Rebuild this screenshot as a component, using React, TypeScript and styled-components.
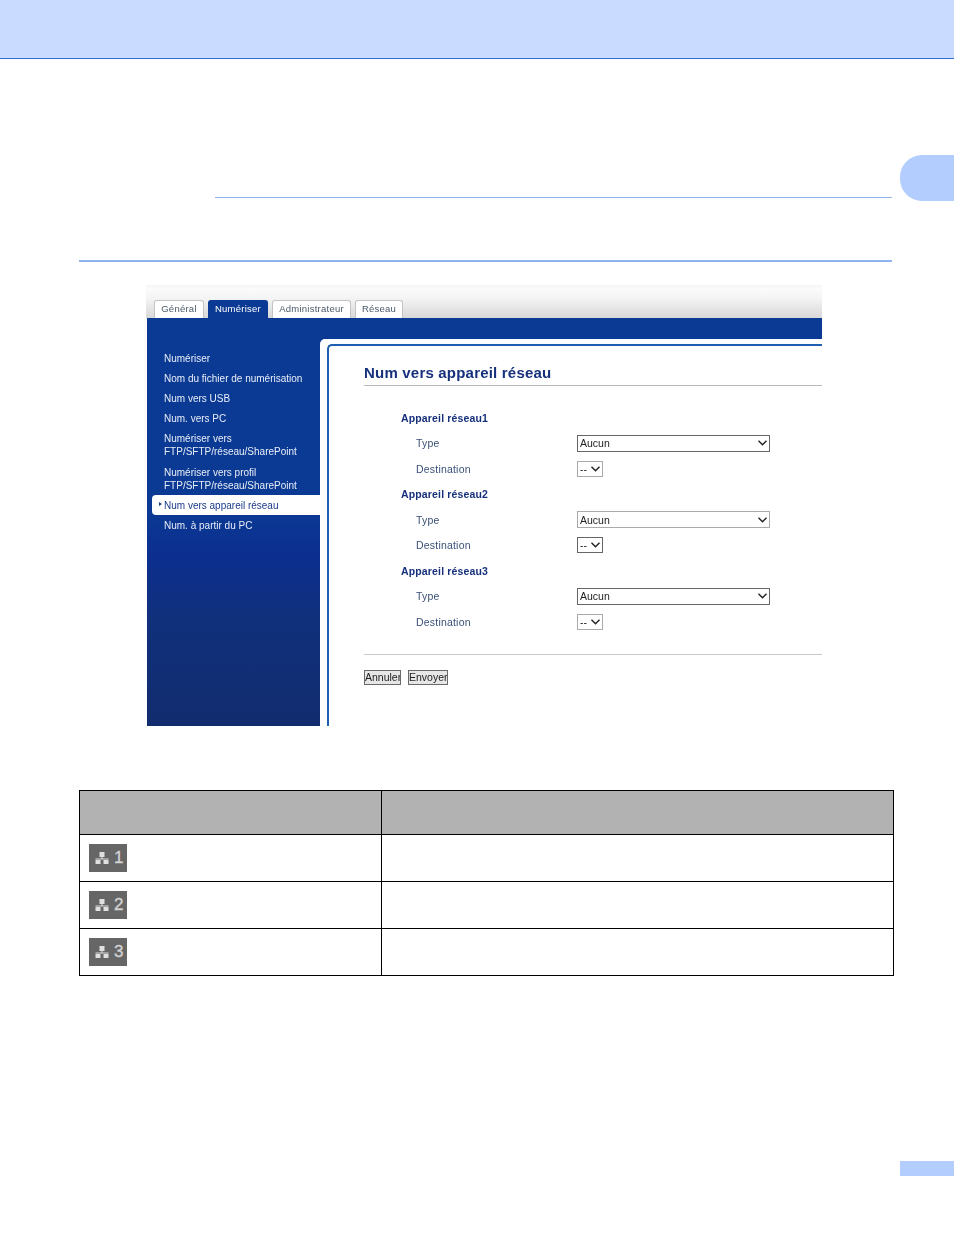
import React from "react";
import styled, { createGlobalStyle } from "styled-components";

const Global = createGlobalStyle`
  html, body { margin: 0; padding: 0; background: #fff; }
  body { font-family: "Liberation Sans", Arial, sans-serif; }
`;

const Page = styled.div`
  position: relative;
  width: 954px;
  height: 1235px;
  overflow: hidden;
  display: flex;
  flex-direction: column;
`;
const Header = styled.header`
  height: 58px;
  background: #c9dbff;
  border-bottom: 1px solid #2f6fe0;
  flex: none;
`;
const ChapterTab = styled.div`
  position: absolute;
  top: 155px;
  right: 0;
  width: 54px;
  height: 46px;
  background: #b3cdff;
  border-radius: 22px 0 0 22px;
`;
const Rule = styled.div<{ $left: number; $top: number; $h: number; $color: string }>`
  flex: none;
  margin: ${(p) => p.$top}px 62px 0 ${(p) => p.$left}px;
  height: ${(p) => p.$h}px;
  background: ${(p) => p.$color};
`;
const Shot = styled.div`
  flex: none;
  width: 676px;
  height: 441px;
  margin: 23px 0 0 146px;
  display: flex;
  flex-direction: column;
  overflow: hidden;
  filter: blur(0.25px);
`;
const TabBar = styled.div`
  flex: none;
  height: 33px;
  box-sizing: border-box;
  padding: 15px 0 0 8px;
  display: flex;
  gap: 4px;
  align-items: flex-end;
  background: linear-gradient(#f4f4f4 0, #fbfbfb 4px, #f3f3f3 14px, #d8d8d8 33px);
`;
const Tab = styled.div<{ $active?: boolean; $w: number }>`
  width: ${(p) => p.$w}px;
  height: 18px;
  box-sizing: border-box;
  border: 1px solid ${(p) => (p.$active ? "#0b3a94" : "#c4c4c4")};
  border-bottom: none;
  border-radius: 3px 3px 0 0;
  background: ${(p) => (p.$active ? "#0b3a94" : "#fff")};
  color: ${(p) => (p.$active ? "#fff" : "#4a5a6a")};
  font-size: 9.5px;
  line-height: 16px;
  text-align: center;
  letter-spacing: 0.25px;
`;
const Body = styled.div`
  flex: 1;
  display: flex;
  min-height: 0;
  padding: 0 0 0 1px;
  background: #fff;
`;
const Sidebar = styled.nav`
  flex: none;
  width: 173px;
  box-sizing: border-box;
  padding-top: 30px;
  padding-left: 5px;
  background: linear-gradient(#0b3a94 0, #0b3a94 190px, #0c2f90 235px, #10307c 300px, #122c6e 408px);
  display: flex;
  flex-direction: column;
`;
const MenuItem = styled.div<{ $active?: boolean }>`
  position: relative;
  padding: 3.6px 0 3.6px 12px;
  font-size: 10px;
  line-height: 13px;
  color: ${(p) => (p.$active ? "#1a3a8a" : "#e8edf6")};
  background: ${(p) => (p.$active ? "#fff" : "transparent")};
  border-radius: ${(p) => (p.$active ? "4px 0 0 4px" : "0")};
`;
const Arrow = styled.span`
  position: absolute;
  left: 7px;
  top: 7px;
  width: 0;
  height: 0;
  border-left: 3px solid #1a3a8a;
  border-top: 2.5px solid transparent;
  border-bottom: 2.5px solid transparent;
`;
const MainBand = styled.div`
  flex: 1;
  min-width: 0;
  padding-top: 21px;
  background: #0b3a94;
  display: flex;
`;
const Panel = styled.div`
  flex: 1;
  background: #fff;
  border-radius: 5px 0 0 0;
  padding: 5px 0 0 7px;
  display: flex;
`;
const Inner = styled.main`
  flex: 1;
  box-sizing: border-box;
  border-top: 2px solid #1f5fb0;
  border-left: 2px solid #1f5fb0;
  border-radius: 5px 0 0 0;
  padding: 18px 0 0 35px;
`;
const Title = styled.h1`
  margin: 0;
  box-sizing: border-box;
  border-bottom: 1px solid #b9b9b9;
  font-size: 15px;
  line-height: 17px;
  font-weight: 700;
  color: #17307c;
  height: 22px;
  letter-spacing: 0.2px;
`;
const Form = styled.div`
  margin-top: 19px;
  padding-left: 37px;
`;
const Row = styled.div`
  height: 25.5px;
  display: flex;
  align-items: center;
`;
const GroupName = styled.div`
  font-size: 10.5px;
  font-weight: 700;
  color: #17307c;
  letter-spacing: 0.15px;
`;
const FieldLabel = styled.label`
  width: 161px;
  margin-left: 15px;
  flex: none;
  font-size: 10.5px;
  color: #3a5078;
  letter-spacing: 0.2px;
`;
const SelectBox = styled.div<{ $w: number; $h: number }>`
  position: relative;
  width: ${(p) => p.$w}px;
  height: ${(p) => p.$h}px;
`;
const Select = styled.select<{ $light?: boolean }>`
  appearance: none;
  display: block;
  width: 100%;
  height: 100%;
  box-sizing: border-box;
  font-family: "Liberation Sans", Arial, sans-serif;
  font-size: 10.5px;
  padding: 0 0 0 2px;
  background: #fff;
  color: #222;
  border: 1px solid ${(p) => (p.$light ? "#aaa" : "#666")};
  border-radius: 0;
`;
const Chevron = styled.svg`
  position: absolute;
  right: 3px;
  top: 50%;
  margin-top: -3px;
  width: 9px;
  height: 6px;
  pointer-events: none;
`;
const Divider = styled.div`
  height: 1px;
  background: #c8c8c8;
  margin-top: 19px;
`;
const Actions = styled.div`
  margin-top: 15px;
  display: flex;
  gap: 7px;
`;
const Btn = styled.button<{ $w: number }>`
  width: ${(p) => p.$w}px;
  height: 15px;
  box-sizing: border-box;
  padding: 0;
  border: 1px solid #6a6a6a;
  background: #e6e6e6;
  color: #222;
  font-family: "Liberation Sans", Arial, sans-serif;
  font-size: 10.5px;
  line-height: 13px;
  white-space: nowrap;
  overflow: hidden;
`;
const Table = styled.table`
  flex: none;
  margin: 64px 0 0 79px;
  width: 815px;
  height: 185px;
  border-collapse: collapse;
  table-layout: fixed;
`;
const Th = styled.th<{ $w?: number }>`
  height: 43px;
  padding: 0;
  background: #b2b2b2;
  border: 1px solid #000;
  width: ${(p) => (p.$w ? `${p.$w}px` : "auto")};
`;
const Td = styled.td`
  height: 46px;
  padding: 0 0 0 9px;
  border: 1px solid #000;
  vertical-align: middle;
`;
const Badge = styled.div`
  width: 38px;
  height: 28px;
  background: #666;
  color: #d4d4d4;
  display: flex;
  align-items: center;
  box-sizing: border-box;
  padding-left: 6px;
  gap: 5px;
  font-size: 17px;
  line-height: 28px;
  -webkit-text-stroke: 0.3px #d4d4d4;
`;
const PageTab = styled.div`
  flex: none;
  align-self: flex-end;
  margin-top: 185px;
  width: 54px;
  height: 15px;
  background: #b3cdff;
`;

const NetIcon = () => (
  <svg width="14" height="12" viewBox="0 0 14 12" fill="#e0e0e0" aria-hidden="true">
    <rect x="4.5" y="0" width="5" height="5" />
    <rect x="6.5" y="5" width="1" height="2" />
    <rect x="0.5" y="6.5" width="13" height="1" />
    <rect x="0.5" y="8" width="5" height="4" />
    <rect x="8.5" y="8" width="5" height="4" />
  </svg>
);

const menu: React.ReactNode[] = [
  "Numériser",
  "Nom du fichier de numérisation",
  "Num vers USB",
  "Num. vers PC",
  <>Numériser vers<br />FTP/SFTP/réseau/SharePoint</>,
  <>Numériser vers profil<br />FTP/SFTP/réseau/SharePoint</>,
];

const Field = ({ w, h, value, light }: { w: number; h: number; value: string; light?: boolean }) => (
  <SelectBox $w={w} $h={h}>
    <Select $light={light} defaultValue={value}><option>{value}</option></Select>
    <Chevron viewBox="0 0 9 6" fill="none" stroke="#222" strokeWidth="1.4" aria-hidden="true">
      <path d="M0.5 0.8 L4.5 4.8 L8.5 0.8" />
    </Chevron>
  </SelectBox>
);

const Group = ({ n, typeLight, destLight }: { n: number; typeLight?: boolean; destLight?: boolean }) => (
  <>
    <Row><GroupName>Appareil réseau{n}</GroupName></Row>
    <Row>
      <FieldLabel>Type</FieldLabel>
      <Field w={193} h={17} value="Aucun" light={typeLight} />
    </Row>
    <Row>
      <FieldLabel>Destination</FieldLabel>
      <Field w={26} h={16} value="--" light={destLight} />
    </Row>
  </>
);

export default function App() {
  return (
    <Page>
      <Global />
      <Header />
      <ChapterTab />
      <Rule $left={215} $top={138} $h={1} $color="#8fb0e8" />
      <Rule $left={79} $top={62} $h={2} $color="#8fb4f0" />
      <Shot>
        <TabBar>
          <Tab $w={50}>Général</Tab>
          <Tab $w={60} $active>Numériser</Tab>
          <Tab $w={79}>Administrateur</Tab>
          <Tab $w={48}>Réseau</Tab>
        </TabBar>
        <Body>
          <Sidebar>
            {menu.map((m, i) => <MenuItem key={i}>{m}</MenuItem>)}
            <MenuItem $active><Arrow />Num vers appareil réseau</MenuItem>
            <MenuItem>Num. à partir du PC</MenuItem>
          </Sidebar>
          <MainBand>
            <Panel>
              <Inner>
                <Title>Num vers appareil réseau</Title>
                <Form>
                  <Group n={1} destLight />
                  <Group n={2} typeLight />
                  <Group n={3} destLight />
                </Form>
                <Divider />
                <Actions>
                  <Btn $w={37}>Annuler</Btn>
                  <Btn $w={40}>Envoyer</Btn>
                </Actions>
              </Inner>
            </Panel>
          </MainBand>
        </Body>
      </Shot>
      <Table>
        <thead>
          <tr><Th $w={301} /><Th /></tr>
        </thead>
        <tbody>
          {[1, 2, 3].map((n) => (
            <tr key={n}>
              <Td><Badge><NetIcon />{n}</Badge></Td>
              <Td />
            </tr>
          ))}
        </tbody>
      </Table>
      <PageTab />
    </Page>
  );
}
